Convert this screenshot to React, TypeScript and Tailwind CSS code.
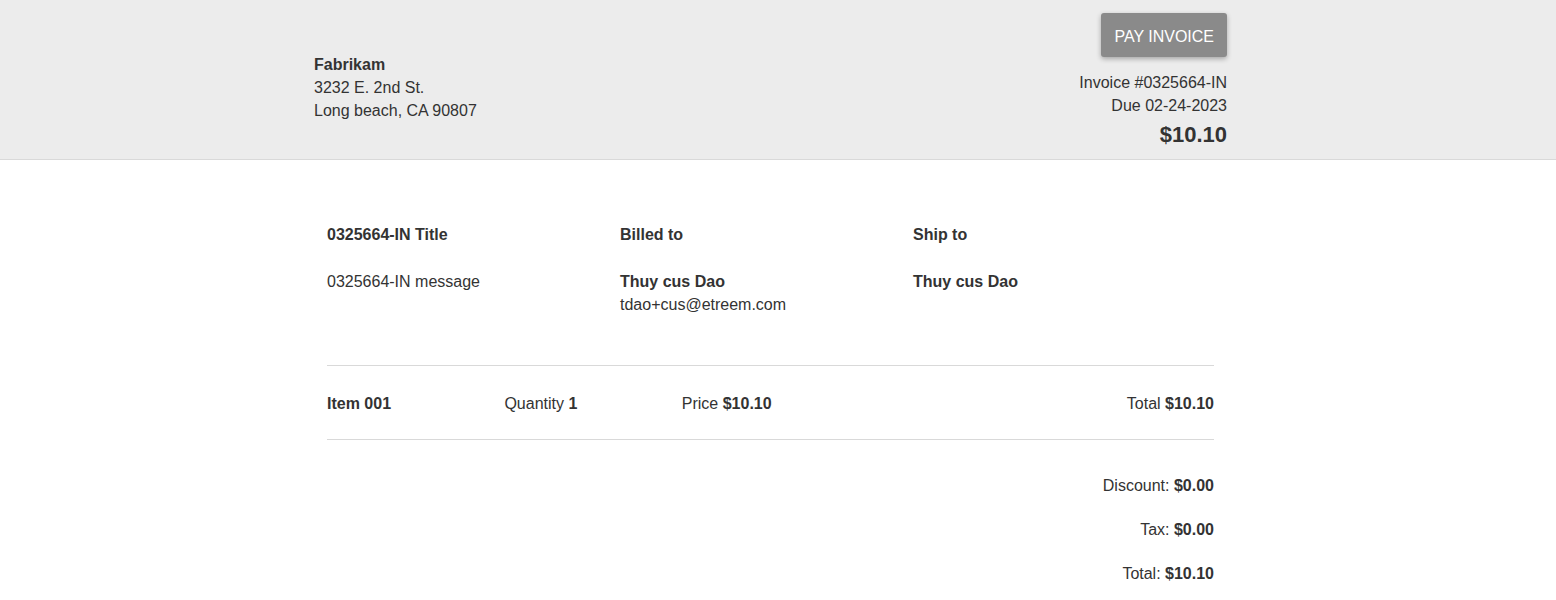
export default function App() {
  return (
    <div className="min-h-screen bg-white text-[16px] text-[#333] [font-family:'Liberation_Sans',Arial,sans-serif]">
      <header className="border-b border-[#d9d9d9] bg-[#ececec]">
        <div className="w-[1541px]">
          <div className="mx-auto flex w-[913px] items-start justify-between pb-[9px] pt-[13px]">
            <div className="mt-[40px] leading-[23px]">
              <div className="font-bold">Fabrikam</div>
              <div>3232 E. 2nd St.</div>
              <div>Long beach, CA 90807</div>
            </div>
            <div className="flex flex-col items-end text-right">
              <button className="h-[44px] rounded-[3px] bg-[#8a8a8a] px-[13px] pt-[3px] text-[16px] uppercase text-white shadow-[0_2px_5px_rgba(0,0,0,0.3)]">
                Pay Invoice
              </button>
              <div className="mt-[14px] leading-[23px]">Invoice #0325664-IN</div>
              <div className="leading-[23px]">Due 02-24-2023</div>
              <div className="mt-[3px] text-[22px] font-bold leading-[30px]">$10.10</div>
            </div>
          </div>
        </div>
      </header>
      <div className="w-[1541px]">
        <main className="mx-auto w-[887px] pt-[63px]">
          <div className="grid grid-cols-[293px_293px_1fr] pb-[49px] leading-[23px]">
            <div>
              <div className="font-bold">0325664-IN Title</div>
              <div className="mt-[24px]">0325664-IN message</div>
            </div>
            <div>
              <div className="font-bold">Billed to</div>
              <div className="mt-[24px] font-bold">Thuy cus Dao</div>
              <div>tdao+cus@etreem.com</div>
            </div>
            <div>
              <div className="font-bold">Ship to</div>
              <div className="mt-[24px] font-bold">Thuy cus Dao</div>
            </div>
          </div>
          <div className="grid grid-cols-5 items-center border-y border-[#d9d9d9] pb-[24px] pt-[26px] leading-[23px]">
            <div className="font-bold">Item 001</div>
            <div>
              Quantity <span className="font-bold">1</span>
            </div>
            <div>
              Price <span className="font-bold">$10.10</span>
            </div>
            <div className="col-span-2 text-right">
              Total <span className="font-bold">$10.10</span>
            </div>
          </div>
          <div className="flex flex-col items-end gap-[21px] pt-[34px] leading-[23px]">
            <div>
              Discount: <span className="font-bold">$0.00</span>
            </div>
            <div>
              Tax: <span className="font-bold">$0.00</span>
            </div>
            <div>
              Total: <span className="font-bold">$10.10</span>
            </div>
          </div>
        </main>
      </div>
    </div>
  );
}
